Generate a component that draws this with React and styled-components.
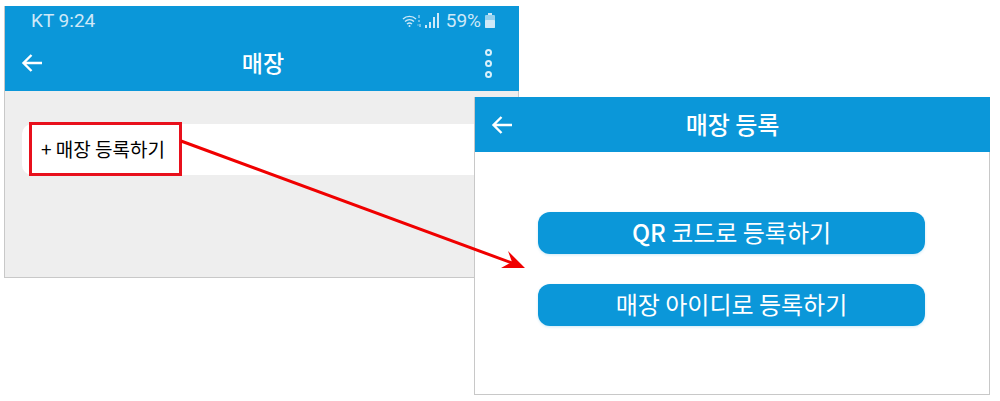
import React from "react";
import styled, { createGlobalStyle } from "styled-components";

const GlobalStyle = createGlobalStyle`
	html, body {
		margin: 0;
		padding: 0;
		background: #fff;
	}
	body {
		font-family: "Noto Sans CJK KR", "Noto Sans", sans-serif;
	}
`;

const Page = styled.div`
	position: relative;
	width: 1000px;
	height: 401px;
	overflow: hidden;
	background: #fff;
`;

const Window = styled.section`
	position: absolute;
	left: ${(p) => p.$left}px;
	top: ${(p) => p.$top}px;
	width: ${(p) => p.$width}px;
	height: ${(p) => p.$height}px;
	box-sizing: border-box;
	display: flex;
	flex-direction: column;
	background: ${(p) => p.$bg};
	border: 1px solid #c8c8c8;
	border-top: 0;
`;

const Header = styled.header`
	background: #0b97d9;
	color: #fff;
	flex: none;
	margin: 0 -1px 0 0;
`;

const StatusBar = styled.div`
	height: 29px;
	display: flex;
	align-items: center;
	justify-content: space-between;
	padding: 0 24px 0 26px;
	color: #cfe9f8;
	font-family: Roboto, sans-serif;
	font-size: 19px;
`;

const StatusRight = styled.div`
	display: flex;
	align-items: center;
	gap: 3px;
`;

const Percent = styled.span`
	margin: 0 1px 0 4px;
`;

const NavBar = styled.div`
	height: ${(p) => p.$height}px;
	display: flex;
	align-items: center;
	padding: ${(p) => p.$padding};
`;

const Title = styled.h1`
	margin: -2px 0 0;
	font-size: ${(p) => p.$size}px;
	font-weight: 500;
	line-height: 1;
`;

const Slot = styled.div`
	flex: 1;
	display: flex;
	justify-content: ${(p) => p.$end ? "flex-end" : "flex-start"};
`;

const MoreDots = styled.div`
	display: flex;
	flex-direction: column;
	gap: 4px;
	margin-right: 13px;
`;

const Dot = styled.span`
	width: 7px;
	height: 7px;
	box-sizing: border-box;
	border: 2px solid #d9f0fb;
	border-radius: 50%;
`;

const Body = styled.div`
	padding: ${(p) => p.$padding};
	display: flex;
	flex-direction: column;
	gap: ${(p) => p.$gap || 0}px;
	align-items: ${(p) => p.$center ? "flex-start" : "stretch"};
`;

const AddRow = styled.div`
	height: 51px;
	box-sizing: border-box;
	display: flex;
	align-items: center;
	padding: 0 0 3px 19px;
	background: #fff;
	border-radius: 10px;
	color: #000;
	font-size: 19px;
	font-weight: 400;
`;

const BlueButton = styled.button`
	width: 387px;
	height: 42px;
	padding: 0 0 2px;
	border: 0;
	border-radius: 12px;
	background: #0b97d9;
	color: #fff;
	font-family: inherit;
	font-size: 24px;
	font-weight: 400;
	line-height: 1;
	box-shadow: 0 1px 3px rgba(11, 151, 217, 0.2);
`;

const Strong = styled.b`
	font-weight: 500;
`;

const Highlight = styled.div`
	position: absolute;
	left: 29px;
	top: 122px;
	width: 153px;
	height: 54px;
	box-sizing: border-box;
	border: 3px solid #e8101c;
`;

const Overlay = styled.svg`
	position: absolute;
	left: 0;
	top: 0;
	pointer-events: none;
`;

const BackArrow = () => (
	<svg width="22" height="20" viewBox="0 0 22 20" fill="none" stroke="#fff" strokeWidth="2.4">
		<path d="M21 10H2.5M10.5 2 2.500 10l8 8" />
	</svg>
);

const WifiIcon = () => (
	<svg width="20" height="14" viewBox="0 0 20 14" fill="none" stroke="#cfe9f8" strokeWidth="1.4">
		<path d="M1 5c3.500-3.500 9.500-3.500 13 0M3 7.500c2.600-2.300 6.400-2.300 9 0M5 10c1.500-1.200 3.500-1.200 5 0" />
		<circle cx="7.500" cy="12" r="1" fill="#cfe9f8" stroke="none" />
		<path d="M17 1v3M17 6v2M15.500 11h1M18 10v3" strokeWidth="1" />
	</svg>
);

const SignalIcon = () => (
	<svg width="14" height="15" viewBox="0 0 14 15" fill="#cfe9f8">
		<rect x="0" y="12" width="2" height="3" />
		<rect x="4" y="9" width="2" height="6" />
		<rect x="8" y="4" width="2" height="11" />
		<rect x="12" y="0" width="2" height="15" />
	</svg>
);

const BatteryIcon = () => (
	<svg width="10" height="15" viewBox="0 0 10 15" fill="#cfe9f8">
		<rect x="3" y="0" width="4" height="2" />
		<rect x="0" y="2" width="10" height="13" rx="1" opacity="0.7" />
		<rect x="0" y="7" width="10" height="8" rx="1" />
	</svg>
);

const App = () => {
	return (
		<Page>
			<GlobalStyle />
			<Window $left={4} $top={6} $width={515} $height={272} $bg="#eeeeee">
				<Header>
					<StatusBar>
						<span>KT 9:24</span>
						<StatusRight>
							<WifiIcon />
							<SignalIcon />
							<Percent>59%</Percent>
							<BatteryIcon />
						</StatusRight>
					</StatusBar>
					<NavBar $height={56} $padding="0 14px 0 16px">
						<Slot><BackArrow /></Slot>
						<Title $size={23}>매장</Title>
						<Slot $end>
							<MoreDots>
								<Dot />
								<Dot />
								<Dot />
							</MoreDots>
						</Slot>
					</NavBar>
				</Header>
				<Body $padding="33px 0 0 17px">
					<AddRow>+ 매장 등록하기</AddRow>
				</Body>
			</Window>
			<Highlight />
			<Window $left={474} $top={97} $width={516} $height={298} $bg="#fff">
				<Header>
					<NavBar $height={55} $padding="0 16px">
						<Slot><BackArrow /></Slot>
						<Title $size={24}>매장 등록</Title>
						<Slot />
					</NavBar>
				</Header>
				<Body $padding="60px 0 0 63px" $gap={30} $center>
					<BlueButton><Strong>QR</Strong> 코드로 등록하기</BlueButton>
					<BlueButton>매장 아이디로 등록하기</BlueButton>
				</Body>
			</Window>
			<Overlay width="1000" height="401" viewBox="0 0 1000 401">
				<path d="M181 141 512 263" stroke="#f00000" strokeWidth="3" />
				<path d="M525 268 501 268 512 262 508 251Z" fill="#f00000" />
			</Overlay>
		</Page>
	);
};

export default App;
